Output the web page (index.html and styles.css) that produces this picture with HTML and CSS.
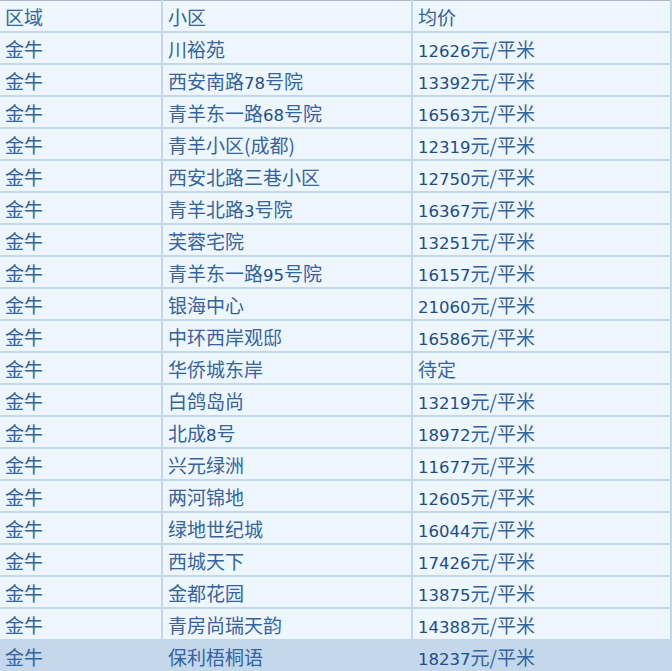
FILE: index.html
```html
<!DOCTYPE html>
<html><head><meta charset="utf-8"><link rel="stylesheet" href="styles.css"></head>
<body>
<table class="tbl">
<tr><td>区域</td><td>小区</td><td>均价</td></tr>
<tr><td>金牛</td><td>川裕苑</td><td><span class="n">12626</span>元/平米</td></tr>
<tr><td>金牛</td><td>西安南路<span class="n">78</span>号院</td><td><span class="n">13392</span>元/平米</td></tr>
<tr><td>金牛</td><td>青羊东一路<span class="n">68</span>号院</td><td><span class="n">16563</span>元/平米</td></tr>
<tr><td>金牛</td><td>青羊小区(成都)</td><td><span class="n">12319</span>元/平米</td></tr>
<tr><td>金牛</td><td>西安北路三巷小区</td><td><span class="n">12750</span>元/平米</td></tr>
<tr><td>金牛</td><td>青羊北路<span class="n">3</span>号院</td><td><span class="n">16367</span>元/平米</td></tr>
<tr><td>金牛</td><td>芙蓉宅院</td><td><span class="n">13251</span>元/平米</td></tr>
<tr><td>金牛</td><td>青羊东一路<span class="n">95</span>号院</td><td><span class="n">16157</span>元/平米</td></tr>
<tr><td>金牛</td><td>银海中心</td><td><span class="n">21060</span>元/平米</td></tr>
<tr><td>金牛</td><td>中环西岸观邸</td><td><span class="n">16586</span>元/平米</td></tr>
<tr><td>金牛</td><td>华侨城东岸</td><td>待定</td></tr>
<tr><td>金牛</td><td>白鸽岛尚</td><td><span class="n">13219</span>元/平米</td></tr>
<tr><td>金牛</td><td>北成<span class="n">8</span>号</td><td><span class="n">18972</span>元/平米</td></tr>
<tr><td>金牛</td><td>兴元绿洲</td><td><span class="n">11677</span>元/平米</td></tr>
<tr><td>金牛</td><td>两河锦地</td><td><span class="n">12605</span>元/平米</td></tr>
<tr><td>金牛</td><td>绿地世纪城</td><td><span class="n">16044</span>元/平米</td></tr>
<tr><td>金牛</td><td>西城天下</td><td><span class="n">17426</span>元/平米</td></tr>
<tr><td>金牛</td><td>金都花园</td><td><span class="n">13875</span>元/平米</td></tr>
<tr><td>金牛</td><td>青房尚瑞天韵</td><td><span class="n">14388</span>元/平米</td></tr>
<tr class="hl"><td>金牛</td><td>保利梧桐语</td><td><span class="n">18237</span>元/平米</td></tr>
</table>
</body></html>
```
FILE: styles.css
```css
html, body { margin: 0; padding: 0; background: #eef6ff; }
.tbl {
  border-collapse: collapse;
  width: 672px;
  border-top: 1px solid #b0b8c4;
  font-family: "Noto Sans CJK SC", "DejaVu Sans", sans-serif;
  font-size: 19px;
  color: #3464a2;
}
.tbl td {
  height: 29px;
  padding: 1px 0 0 5px;
  border: 2px solid #c4d7eb;
  border-top: none;
  background: #eef6ff;
  vertical-align: middle;
  line-height: 29px;
  white-space: nowrap;
}
.tbl td:first-child { width: 156px; border-left: none; }
.tbl td:nth-child(2) { width: 243px; }
.tbl td:last-child { border-right: 2px solid #c4d7eb; }
.tbl .n { font-family: "DejaVu Sans", sans-serif; font-size: 16.5px; line-height: 1; color: #1b4e8e; }
.tbl tr.hl td { background: #c4d7eb; }
```
